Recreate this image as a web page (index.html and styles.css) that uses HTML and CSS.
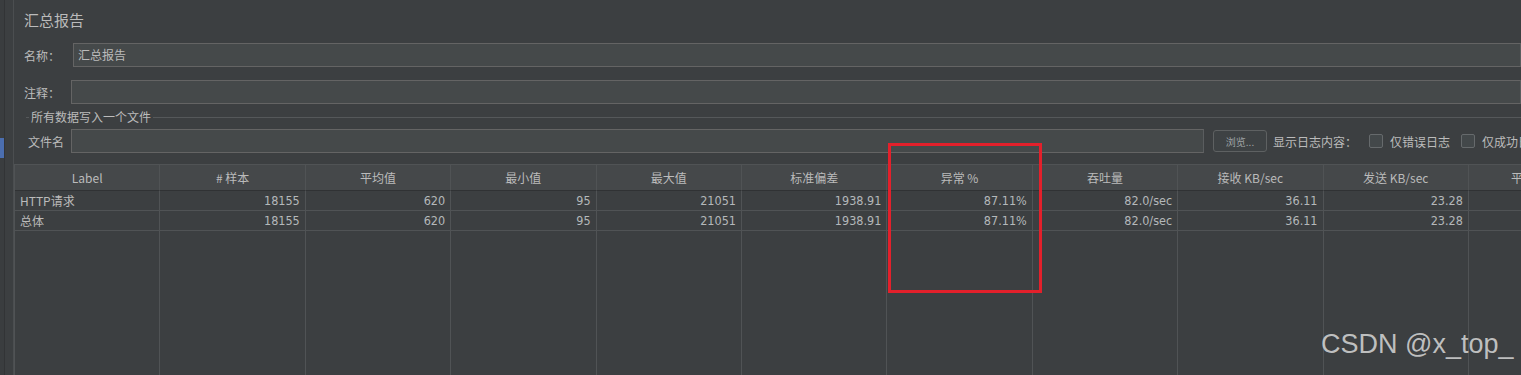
FILE: index.html
```html
<!DOCTYPE html>
<html>
<head>
    <title>汇总报告</title>
    <link rel="stylesheet" href="styles.css">
</head>
<body>
<div class="app">
    <div class="rail"><div class="rail-mark"></div></div>
    <div class="gutter"></div>

    <div class="panel">
        <div class="title">汇总报告</div>

        <div class="field name-field">
            <label class="name-label">名称：</label>
            <div class="input">汇总报告</div>
        </div>

        <div class="field comment-field">
            <label class="comment-label">注释：</label>
            <div class="input"></div>
        </div>

        <div class="group-title">
            <span class="group-line short"></span>
            <span class="group-text">所有数据写入一个文件</span>
            <span class="group-line"></span>
        </div>

        <div class="field file-field">
            <label class="file-label">文件名</label>
            <div class="input file-input"></div>
            <button class="browse">浏览...</button>
            <span class="log-label">显示日志内容：</span>
            <span class="check"></span>
            <span class="check-text">仅错误日志</span>
            <span class="check second"></span>
            <span class="check-text">仅成功日志</span>
        </div>

        <div class="table">
            <div class="th">Label</div>
            <div class="th"># 样本</div>
            <div class="th">平均值</div>
            <div class="th">最小值</div>
            <div class="th">最大值</div>
            <div class="th">标准偏差</div>
            <div class="th">异常 %</div>
            <div class="th">吞吐量</div>
            <div class="th">接收 KB/sec</div>
            <div class="th">发送 KB/sec</div>
            <div class="th">平均字节数</div>

            <div class="td label">HTTP请求</div>
            <div class="td num">18155</div>
            <div class="td num">620</div>
            <div class="td num">95</div>
            <div class="td num">21051</div>
            <div class="td num">1938.91</div>
            <div class="td num">87.11%</div>
            <div class="td num">82.0/sec</div>
            <div class="td num">36.11</div>
            <div class="td num">23.28</div>
            <div class="td num">451.0</div>

            <div class="td label">总体</div>
            <div class="td num">18155</div>
            <div class="td num">620</div>
            <div class="td num">95</div>
            <div class="td num">21051</div>
            <div class="td num">1938.91</div>
            <div class="td num">87.11%</div>
            <div class="td num">82.0/sec</div>
            <div class="td num">36.11</div>
            <div class="td num">23.28</div>
            <div class="td num">451.0</div>

            <div class="tf"></div>
            <div class="tf"></div>
            <div class="tf"></div>
            <div class="tf"></div>
            <div class="tf"></div>
            <div class="tf"></div>
            <div class="tf"></div>
            <div class="tf"></div>
            <div class="tf"></div>
            <div class="tf"></div>
            <div class="tf"></div>
        </div>
    </div>

    <div class="highlight"></div>
    <div class="watermark">CSDN @x_top_</div>
</div>
</body>
</html>
```

FILE: styles.css
```css
html, body {
    margin: 0;
    height: 100%;
    overflow: hidden;
    background-color: #3c3f41;
}
body {
    font-family: "Noto Sans CJK SC", "Liberation Sans", sans-serif;
    font-size: 12px;
    color: #bbbbbb;
}
.app {
    position: relative;
    display: flex;
    height: 375px;
}

/* left side rails */
.rail {
    width: 4px;
    padding-top: 138px;
    border-right: 1px solid #323436;
    background-color: #3a3d3f;
}
.rail-mark {
    height: 20px;
    background-color: #4b6eaf;
}
.gutter {
    width: 8px;
    border-right: 1px solid #4b4e50;
}

.panel {
    flex: 1;
    min-width: 0;
    display: flex;
    flex-direction: column;
    overflow: hidden;
}
.title {
    font-size: 15px;
    line-height: 20px;
    margin: 10px 0 0 10px;
}

/* form rows */
.field {
    display: flex;
    align-items: center;
    height: 24px;
    padding-left: 10px;
    white-space: nowrap;
}
.field > * {
    flex: none;
}
.name-field {
    margin-top: 13px;
}
.comment-field {
    margin-top: 13px;
}
.name-label {
    width: 49px;
}
.comment-label {
    width: 47px;
}
.field > .input {
    flex: 1;
    min-width: 0;
}
.input {
    height: 24px;
    box-sizing: border-box;
    border: 1px solid #646464;
    border-right-color: #5a5d5f;
    background-color: #45494a;
    padding-left: 4px;
    line-height: 22px;
}

.group-title {
    display: flex;
    align-items: center;
    height: 14px;
    margin-top: 6px;
    padding-left: 12px;
    white-space: nowrap;
}
.group-line {
    flex: 1;
    height: 1px;
    background-color: #55585a;
}
.group-line.short {
    flex: none;
    width: 3px;
}
.group-text {
    padding: 0 2px;
    line-height: 14px;
}

.file-field {
    margin-top: 5px;
    padding-left: 14px;
}
.file-label {
    width: 43px;
}
.field > .file-input {
    flex: none;
    width: 1133px;
}
.browse {
    width: 54px;
    height: 22px;
    margin-left: 9px;
    padding: 0;
    border: 1px solid #5e6162;
    border-radius: 3px;
    background-color: #3e4244;
    color: #9ea3a5;
    font-family: "Noto Sans CJK SC", sans-serif;
    font-size: 10px;
}
.log-label {
    margin-left: 6px;
}
.check {
    width: 12px;
    height: 12px;
    margin-left: 12px;
    border: 1px solid #666a6c;
    border-radius: 2px;
    background-color: #43484a;
}
.check.second {
    margin-left: 11px;
}
.check-text {
    margin-left: 7px;
}

/* results table */
.table {
    flex: 1;
    display: grid;
    grid-template-columns: repeat(11, 145.4px);
    grid-template-rows: 26px 20px 20px 1fr;
    margin-top: 11px;
    border-top: 1px solid #505355;
    border-left: 1px solid #505355;
}
.th, .td, .tf {
    box-sizing: border-box;
    border-right: 1px solid #505355;
    white-space: nowrap;
    overflow: hidden;
}
.th {
    background-color: #45484a;
    border-bottom: 1px solid #303234;
    text-align: center;
    line-height: 25px;
}
.td {
    border-bottom: 1px solid #505355;
    line-height: 19px;
    padding: 0 5px;
}
.td.num {
    text-align: right;
    font-family: "Liberation Sans Narrow", "DejaVu Sans Condensed", "Liberation Sans", sans-serif;
    font-size: 12.5px;
    color: #b4b8ba;
}

.highlight {
    position: absolute;
    left: 888px;
    top: 143px;
    width: 148px;
    height: 144px;
    border: 3px solid #e3202b;
}
.watermark {
    position: absolute;
    left: 1321px;
    top: 329px;
    font-family: "Liberation Sans", Arial, sans-serif;
    font-size: 27px;
    color: rgba(215, 215, 215, 0.85);
    white-space: nowrap;
}
```
